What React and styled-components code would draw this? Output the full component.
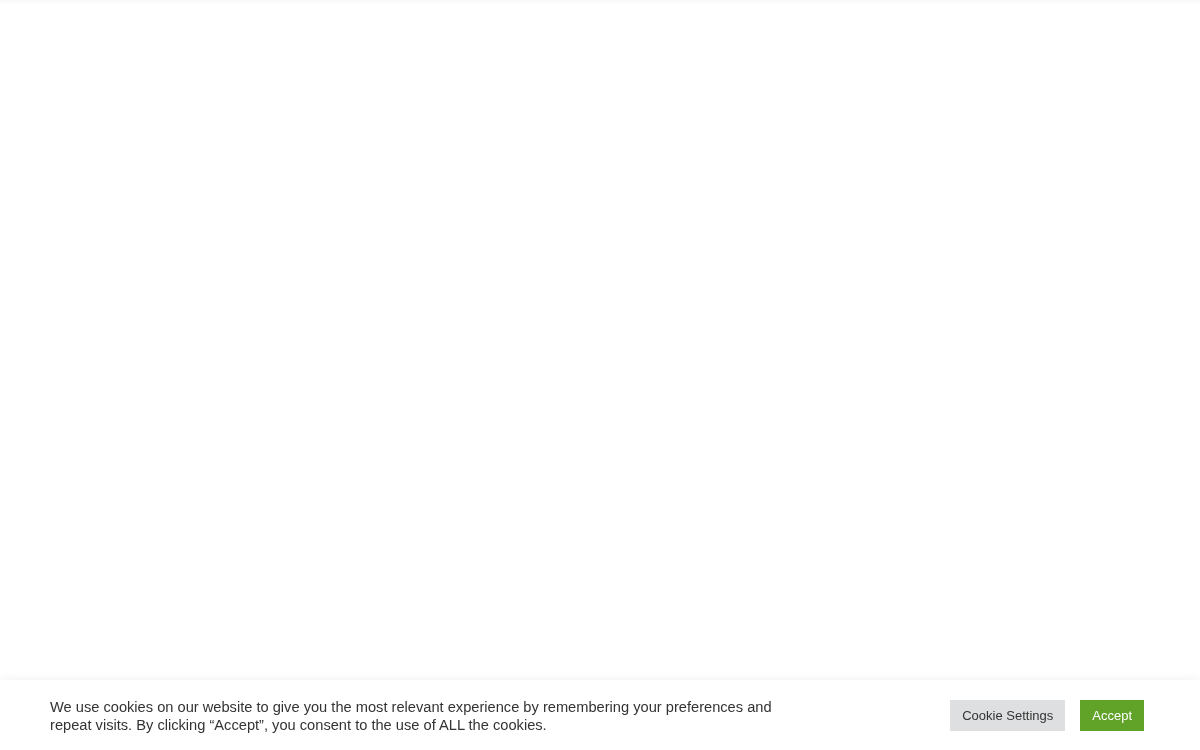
import React from "react";
import styled, { createGlobalStyle } from "styled-components";

const GlobalStyle = createGlobalStyle`
  html, body {
    margin: 0;
    padding: 0;
    background: #fff;
    font-family: "Liberation Sans", Arial, sans-serif;
  }
`;

const Page = styled.div`
  min-height: 100vh;
  display: flex;
  flex-direction: column;
`;

const TopBar = styled.header`
  height: 0;
  box-shadow: 0 0 4px 1px rgba(0, 0, 0, 0.08);
`;

const CookieBar = styled.div`
  position: fixed;
  left: 0;
  right: 0;
  bottom: 0;
  height: 70px;
  box-sizing: border-box;
  padding: 0 56px 0 50px;
  background: #fff;
  box-shadow: 0 -1px 10px rgba(0, 0, 0, 0.06);
  display: flex;
  align-items: center;
  justify-content: space-between;
`;

const Message = styled.p`
  margin: 0;
  padding-top: 2px;
  width: 740px;
  font-size: 14.65px;
  line-height: 18px;
  color: #333;
`;

const Actions = styled.div`
  display: flex;
  gap: 15px;
`;

const Button = styled.button`
  border: 0;
  border-radius: 0;
  height: 31px;
  padding: 0 12px;
  font-family: "Liberation Sans", Arial, sans-serif;
  font-size: 13px;
  cursor: pointer;
  background: ${(p) => (p.$primary ? "#61a229" : "#dedfe0")};
  color: ${(p) => (p.$primary ? "#fff" : "#333")};
`;

export default function App() {
  return (
    <Page>
      <GlobalStyle />
      <TopBar />
      <CookieBar>
        <Message>
          We use cookies on our website to give you the most relevant experience by
          remembering your preferences and repeat visits. By clicking “Accept”, you
          consent to the use of ALL the cookies.
        </Message>
        <Actions>
          <Button>Cookie Settings</Button>
          <Button $primary>Accept</Button>
        </Actions>
      </CookieBar>
    </Page>
  );
}
